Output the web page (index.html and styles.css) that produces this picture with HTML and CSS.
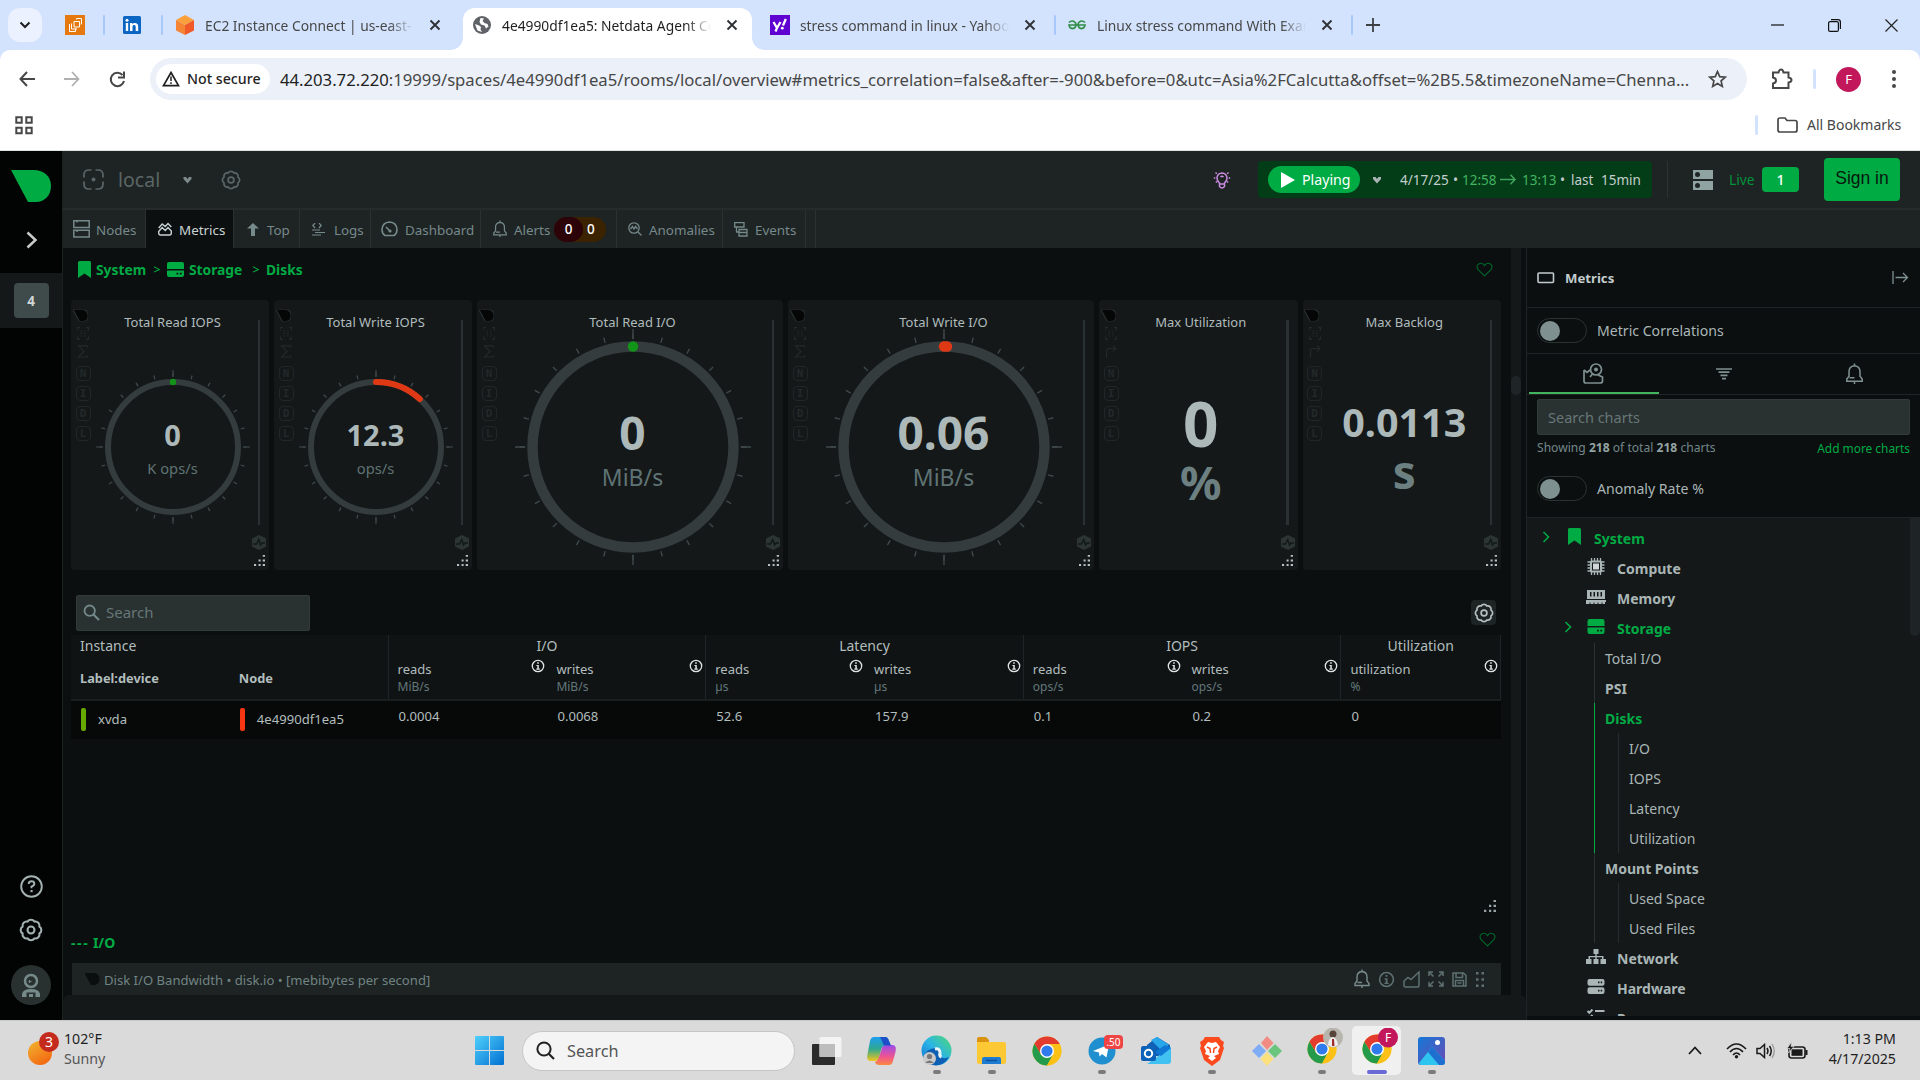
FILE: index.html
```
<!DOCTYPE html>
<html lang="en">
<head>
<meta charset="utf-8">
<title>4e4990df1ea5: Netdata Agent Console</title>
<link rel="stylesheet" href="styles.css">
</head>
<body>
<svg class="defs" width="0" height="0">
  <defs>
    <symbol id="nd" viewBox="0 0 40 32"><path d="M0 0H22C34 0 40 7 40 16C40 26 33 32 25 32H17Z"/></symbol>
    <symbol id="x" viewBox="0 0 14 14"><path d="M2.5 2.5L11.5 11.5M11.5 2.5L2.5 11.5" fill="none" stroke="currentColor" stroke-width="1.9"/></symbol>
    <symbol id="gear" viewBox="-10 -10 20 20"><path d="M-2.9-7A3.4 3.4 0 0 1 2.9-7A3.4 3.4 0 0 1 7-2.9A3.4 3.4 0 0 1 7 2.9A3.4 3.4 0 0 1 2.9 7A3.4 3.4 0 0 1-2.9 7A3.4 3.4 0 0 1-7 2.9A3.4 3.4 0 0 1-7-2.9A3.4 3.4 0 0 1-2.9-7Z" fill="none" stroke="currentColor" stroke-width="1.7"/><circle r="2.9" fill="none" stroke="currentColor" stroke-width="1.7"/></symbol>
    <symbol id="bell" viewBox="0 0 18 20"><path d="M2 16.5V14.5L4 12V8Q4 3 9 2.5Q14 3 14 8V12L16 14.5V16.5ZM9 .5V2.5M9 16.500V19M4.500 13.500H9" fill="none" stroke="currentColor" stroke-width="1.4"/></symbol>
    <symbol id="caret" viewBox="0 0 8 8"><path d="M0 1H2.500L4 3L5.500 1H8V3L4 7.500L0 3Z" fill="currentColor"/></symbol>
    <symbol id="chev" viewBox="0 0 8 12"><path d="M1.500 1L6.500 6L1.500 11" fill="none" stroke="currentColor" stroke-width="1.600"/></symbol>
    <symbol id="bookmark" viewBox="0 0 13 17"><path d="M1.500 0H11.500Q13 0 13 1.500V17L6.500 12.500L0 17V1.500Q0 0 1.500 0Z" fill="currentColor"/></symbol>
    <symbol id="disk" viewBox="0 0 17 15"><path d="M2 0H15Q17 0 17 2V7H0V2Q0 0 2 0ZM0 8.500H17V13Q17 15 15 15H2Q0 15 0 13ZM9.500 10.800V12.600H11.300V10.800ZM12.800 10.800V12.600H14.600V10.800Z" fill="currentColor" fill-rule="evenodd"/></symbol>
    <symbol id="servers" viewBox="0 0 17 15"><path d="M2 0H15Q17 0 17 2V4.700Q17 6.700 15 6.700H2Q0 6.700 0 4.700V2Q0 0 2 0ZM10.500 2.500V4.200H12V2.500ZM13.200 2.500V4.200H14.700V2.500ZM2 8.300H15Q17 8.300 17 10.300V13Q17 15 15 15H2Q0 15 0 13V10.300Q0 8.300 2 8.300ZM10.500 10.800V12.500H12V10.800ZM13.200 10.800V12.500H14.700V10.800Z" fill="currentColor" fill-rule="evenodd"/></symbol>
    <symbol id="heart" viewBox="0 0 18 16"><path d="M9 14.800L2.200 8.200Q.2 5.500 1.600 3.200Q4 .2 7.300 2L9 3.800L10.700 2Q14 .2 16.400 3.200Q17.800 5.500 15.800 8.200Z" fill="none" stroke="currentColor" stroke-width="1.200"/></symbol>
    <symbol id="dots" viewBox="0 0 12 12"><path d="M9.500 0H12V2H9.500ZM5 4.800H7.200V7H5ZM9.500 4.800H12V7H9.500ZM0 9.700H2.300V12H0ZM5 9.700H7.200V12H5ZM9.500 9.700H12V12H9.500Z" fill="currentColor"/></symbol>
    <symbol id="hex" viewBox="0 0 14 15"><path d="M7 0L14 3.600V11.400L7 15L0 11.400V3.600Z" fill="#2c3434"/><path d="M1 9H4.500L6.800 4.500L8.500 10L10 8H13" fill="none" stroke="#131718" stroke-width="1.400"/></symbol>
    <symbol id="info" viewBox="0 0 14 14"><circle cx="7" cy="7" r="5.700" fill="none" stroke="currentColor" stroke-width="1.300"/><path d="M6.200 3.200H7.800V4.700H6.200ZM5.400 6H7.800V9.600H8.800V10.700H5.300V9.600H6.300V7H5.400Z" fill="currentColor"/></symbol>
    <symbol id="mag" viewBox="0 0 17 17"><circle cx="6.700" cy="6.700" r="5.200" fill="none" stroke="currentColor" stroke-width="1.800"/><path d="M10.500 10.500L16 16" stroke="currentColor" stroke-width="2.200"/></symbol>
    <symbol id="grid4" viewBox="0 0 12 13"><path d="M0 3.500V.6H3M9 .6H11.400V3.500M11.400 9.500V12.400H9M3 12.400H.6V9.500M3.500 4H5M7 4H8.500M3.500 6.500H5M7 6.500H8.500M3.500 9H5M7 9H8.500" fill="none" stroke="currentColor" stroke-width="1.200"/></symbol>
    <symbol id="sigma" viewBox="0 0 12 13"><path d="M10.500 2.500V.8H1.500L7 6.500L1.500 12H10.500V10.300" fill="none" stroke="currentColor" stroke-width="1.200"/></symbol>
    <symbol id="turn" viewBox="0 0 12 13"><path d="M1.500 12.500V6.500Q1.500 3.500 4.500 3.500H11M8 .5L11 3.500L8 6.500" fill="none" stroke="currentColor" stroke-width="1.200"/></symbol>
    <symbol id="chrome" viewBox="-15 -15 30 30"><circle r="14.500" fill="#fbc116"/><path d="M-12.560-7.250A14.500 14.500 0 0 1 12.560-7.250L12.560-7H0L-6 3.500Z" fill="#e33b2e"/><path d="M-12.560-7.250A14.500 14.500 0 0 0 0 14.500L6 3.700L-6 3.500Z" fill="#239b4b"/><path d="M0-7H12.560A14.500 14.500 0 0 1 0 14.500L6 3.500Z" fill="#fbc116"/><circle r="7" fill="#fff"/><circle r="5.600" fill="#2f7bee"/></symbol>
    <linearGradient id="gSun" x1="0" y1="0" x2=".6" y2="1"><stop offset="0" stop-color="#f2b630"/><stop offset="1" stop-color="#f26a12"/></linearGradient>
    <linearGradient id="gWin" x1="0" y1="0" x2="1" y2="1"><stop offset="0" stop-color="#4fd0fb"/><stop offset="1" stop-color="#0270d2"/></linearGradient>
    <linearGradient id="gEdge" x1="0" y1="1" x2="1" y2="0"><stop offset="0" stop-color="#0c6fd0"/><stop offset=".5" stop-color="#2bb5e6"/><stop offset="1" stop-color="#4fd96f"/></linearGradient>
    <linearGradient id="gCo1" x1="0" y1="0" x2="0" y2="1"><stop offset="0" stop-color="#1b9df0"/><stop offset=".5" stop-color="#2fa88f"/><stop offset="1" stop-color="#f4c51c"/></linearGradient>
    <linearGradient id="gCo2" x1="0" y1="0" x2="0" y2="1"><stop offset="0" stop-color="#9a4bea"/><stop offset=".6" stop-color="#f0568f"/><stop offset="1" stop-color="#fb8a3c"/></linearGradient>
    <linearGradient id="gPh" x1="0" y1="0" x2="1" y2="1"><stop offset="0" stop-color="#1478d6"/><stop offset="1" stop-color="#6b4bb5"/></linearGradient>
  </defs>
</svg>

<header class="tabstrip">
  <div class="tabsearch"><svg width="12" height="8" viewBox="0 0 12 8"><path d="M1.500 1.500L6 6L10.500 1.500" fill="none" stroke="#1f1f1f" stroke-width="2"/></svg></div>
  <div class="pin pin-a"><svg width="20" height="20" viewBox="0 0 20 20"><rect width="20" height="20" fill="#e5780f"/><path d="M9 6.500H14.500V12H9ZM11.500 4.500V3.500H16.500V9H15.500M4.500 9V16.500H10.500V13.500M6.500 8.500V14H12" fill="none" stroke="#fff" stroke-width="1"/></svg></div>
  <i class="tsep"></i>
  <div class="pin pin-b"><svg width="18" height="18" viewBox="0 0 18 18"><rect width="18" height="18" rx="1.500" fill="#0a66c2"/><path d="M2.800 7H5.200V15H2.800ZM7 7H9.300V8.200C10.500 6.200 15.200 6.300 15.200 10.200V15H12.700V10.800C12.700 8.300 9.500 8.400 9.500 10.800V15H7Z" fill="#fff"/><circle cx="4" cy="4.200" r="1.500" fill="#fff"/></svg></div>
  <i class="tsep"></i>
  <div class="tab tab-ec2"><svg width="18" height="20" viewBox="0 0 18 20"><path d="M9 0L18 5L9 10L0 5Z" fill="#fba13c"/><path d="M0 5L9 10V20L0 15.500Z" fill="#f58534"/><path d="M18 5L9 10V20L18 15.500Z" fill="#f05a28"/></svg><span class="ttl">EC2 Instance Connect | us-east-1</span><svg class="close" width="14" height="14"><use href="#x"/></svg></div>
  <div class="tab tab-on"><svg width="18" height="18" viewBox="0 0 18 18"><circle cx="9" cy="9" r="9" fill="#5f6368"/><path d="M2 8L6 9.500L8 11L7.500 13.500L9 16L4.500 14.500ZM7.500 2L11 2.500L9.500 5L11.500 7L14.500 8L15.500 10.500L13 12.500L11.500 9.500L8 8.500L6.500 6Z" fill="#fff"/></svg><span class="ttl">4e4990df1ea5: Netdata Agent Console</span><svg class="close" width="14" height="14"><use href="#x"/></svg></div>
  <div class="tab tab-yahoo"><svg width="20" height="20" viewBox="0 0 20 20"><rect width="20" height="20" fill="#5f01d1"/><path d="M3.500 7L7 13L5.500 16.500M10.500 7L7 13M15.800 4L13 10.500" fill="none" stroke="#fff" stroke-width="2.300"/><circle cx="12.300" cy="13.200" r="1.400" fill="#fff"/></svg><span class="ttl">stress command in linux - Yahoo Search</span><svg class="close" width="14" height="14"><use href="#x"/></svg></div>
  <i class="tsep"></i>
  <div class="tab tab-gfg"><svg width="18" height="10" viewBox="0 0 18 10"><path d="M1 2.500Q3 .5 5.500 1.200Q8.300 2.500 8 5Q7.500 8.500 4.500 8.700Q1.500 8.500 1 5H17Q16.500 8.500 13.500 8.700Q10.500 8.500 10 5Q9.700 2.500 12.500 1.200Q15 .5 17 2.500" fill="none" stroke="#2f8d46" stroke-width="1.700"/></svg><span class="ttl">Linux stress command With Examples</span><svg class="close" width="14" height="14"><use href="#x"/></svg></div>
  <i class="tsep"></i>
  <svg class="plus" width="14" height="14" viewBox="0 0 14 14"><path d="M7 0V14M0 7H14" stroke="#3c4043" stroke-width="1.800"/></svg>
  <div class="winbtns">
    <svg width="13" height="13" viewBox="0 0 13 13"><path d="M0 6H13" stroke="#111" stroke-width="1.200"/></svg>
    <svg width="13" height="13" viewBox="0 0 13 13"><rect x=".6" y="2.600" width="9.800" height="9.800" rx="1.500" fill="none" stroke="#111" stroke-width="1.200"/><path d="M3 .6H10Q12.400.6 12.400 3V10" fill="none" stroke="#111" stroke-width="1.200"/></svg>
    <svg width="13" height="13" viewBox="0 0 13 13"><path d="M.5.5L12.500 12.500M12.500.5L.5 12.500" stroke="#222" stroke-width="1.200"/></svg>
  </div>
</header>

<section class="chrome-bars">
  <div class="toolbar">
    <svg class="nav-back" width="16" height="16" viewBox="0 0 16 16"><path d="M8 1L1.500 8L8 15M1.500 8H16" fill="none" stroke="#474747" stroke-width="2"/></svg>
    <svg class="nav-fwd" width="16" height="16" viewBox="0 0 16 16"><path d="M8 1L14.500 8L8 15M14.500 8H0" fill="none" stroke="#b0b0b0" stroke-width="1.800"/></svg>
    <svg class="nav-reload" width="17" height="17" viewBox="0 0 17 17"><path d="M13.500 4A6.700 6.700 0 1 0 15 10M15 .5V6.500H9" fill="none" stroke="#474747" stroke-width="2"/></svg>
    <div class="omnibox">
      <div class="chip"><svg width="18" height="16" viewBox="0 0 18 16"><path d="M9 1.500L16.500 14.700H1.500Z" fill="none" stroke="#1f1f1f" stroke-width="1.700"/><path d="M9 5.500V10M9 11.300V13" stroke="#1f1f1f" stroke-width="1.500"/></svg><span>Not secure</span></div>
      <div class="url"><b>44.203.72.220</b>:19999/spaces/4e4990df1ea5/rooms/local/overview#metrics_correlation=false&amp;after=-900&amp;before=0&amp;utc=Asia%2FCalcutta&amp;offset=%2B5.5&amp;timezoneName=Chenna...</div>
      <svg class="star" width="19" height="18" viewBox="0 0 19 18"><path d="M9.500 1.500L11.700 6.700L17.300 7.200L13.100 10.900L14.300 16.400L9.500 13.500L4.700 16.400L5.900 10.900L1.700 7.200L7.300 6.700Z" fill="none" stroke="#474747" stroke-width="1.700"/></svg>
    </div>
    <svg class="puzzle" width="22" height="22" viewBox="0 0 22 22"><path d="M2 4.500H7.500Q8 1.500 10 1.500Q12 1.500 12.500 4.500H17.500V9.500Q20.500 10 20.500 12Q20.500 14 17.500 14.500V20H2V15.500Q5 15 5 12.500Q5 10 2 9.500Z" fill="none" stroke="#474747" stroke-width="2"/></svg>
    <i class="tbsep"></i>
    <div class="avatar">F</div>
    <svg class="kebab" width="4" height="18" viewBox="0 0 4 18"><circle cx="2" cy="2" r="2"/><circle cx="2" cy="9" r="2"/><circle cx="2" cy="16" r="2"/></svg>
  </div>
  <div class="bookmarks">
    <svg width="19" height="19" viewBox="0 0 19 19"><path d="M1.300 1.300H6.700V6.700H1.300ZM11.300 1.300H16.700V6.700H11.300ZM1.300 11.800H6.700V17.200H1.300ZM11.300 11.800H16.700V17.200H11.300Z" fill="none" stroke="#474747" stroke-width="2"/></svg>
    <i class="tbsep"></i>
    <svg width="21" height="16" viewBox="0 0 21 16"><path d="M1 3Q1 1 3 1H8L10 3.500H18Q20 3.500 20 5.500V13Q20 15 18 15H3Q1 15 1 13Z" fill="none" stroke="#474747" stroke-width="1.700"/></svg>
    <span>All Bookmarks</span>
  </div>
</section>

<main class="app">
  <nav class="rail">
    <svg class="logo" width="40" height="32"><use href="#nd"/></svg>
    <svg class="rail-chev" width="12" height="18" viewBox="0 0 12 18"><path d="M1.500 1.500L9.500 9L1.500 16.500" fill="none" stroke="#c6cccc" stroke-width="2.500"/></svg>
    <div class="space"><span>4</span></div>
    <svg class="rail-help" width="23" height="23" viewBox="0 0 23 23"><circle cx="11.500" cy="11.500" r="10.300" fill="none" stroke="#a4b1b1" stroke-width="1.900"/><path d="M8.700 9Q8.700 6.300 11.500 6.300Q14.300 6.300 14.300 8.700Q14.300 10.500 11.500 11.700V13.300" fill="none" stroke="#a4b1b1" stroke-width="1.900"/><rect x="10.500" y="15" width="2.100" height="2.200" fill="#a4b1b1"/></svg>
    <svg class="rail-gear" width="24" height="24"><use href="#gear"/></svg>
    <div class="user"><svg width="24" height="24" viewBox="0 0 24 24"><circle cx="12" cy="8" r="6" fill="none" stroke="#768a8a" stroke-width="2.500"/><path d="M9.500 8.500H12.500M10.500 7V10" stroke="#768a8a" stroke-width="1.200"/><path d="M3 24V21Q4 16 12 16Q20 16 21 21V24H16.500V19.500H7.500V24Z" fill="#768a8a"/><path d="M10 21H14V24H10Z" fill="#768a8a"/></svg></div>
  </nav>

  <div class="body">
    <div class="topbar">
      <svg class="room" width="21" height="21" viewBox="0 0 21 21"><path d="M8.500 1H6Q1 1 1 6V8.500M12.500 1H15Q20 1 20 6V8.500M8.500 20H6Q1 20 1 15V12.500M12.500 20H15Q20 20 20 15V12.500" fill="none" stroke="#5b6666" stroke-width="1.700"/><circle cx="10.500" cy="10.500" r="2" fill="#5b6666"/></svg>
      <span class="roomname">local</span>
      <svg class="caret1" width="9" height="8"><use href="#caret"/></svg>
      <svg class="gear1" width="20" height="20"><use href="#gear"/></svg>
      <svg class="bulb" width="18" height="22" viewBox="0 0 18 22"><path d="M6.500 14Q3.700 11.500 4 8.500Q4.800 4.200 9 4Q13.200 4.200 14 8.500Q14.300 11.500 11.500 14V17.500Q9 20.500 6.500 17.500ZM6.500 15H11.500M2.500 3.500L3.800 4.800M15.500 3.500L14.200 4.800M.8 9H2.300M17.200 9H15.700M2.800 13.500L4 12.500M15.200 13.500L14 12.500M7.500 8Q9 6.500 10.500 8" fill="none" stroke="#c98be0" stroke-width="1.500"/></svg>
      <div class="timebox">
        <div class="playing"><svg width="14" height="16" viewBox="0 0 14 16"><path d="M0 0L14 8L0 16Z" fill="#fff"/></svg><span>Playing</span></div>
        <svg class="caret2" width="8" height="8"><use href="#caret"/></svg>
        <span class="t-date">4/17/25</span><span class="t-dot">•</span><span class="t-g">12:58</span>
        <svg class="arrow" width="16" height="11" viewBox="0 0 16 11"><path d="M0 5.500H15M10.500.8L15 5.500L10.500 10.200" fill="none" stroke="#42a55d" stroke-width="1.500"/></svg>
        <span class="t-g">13:13</span><span class="t-dot">•</span><span class="t-last">last</span><span>15min</span>
      </div>
      <i class="vsep"></i>
      <svg class="nodeicon" width="20" height="20" viewBox="0 0 20 20"><path d="M0 0H20V9H0ZM0 11H20V20H0Z" fill="#8fa3a3"/><circle cx="4.500" cy="4.500" r="2.500" fill="#1e2323"/><circle cx="4.500" cy="15.500" r="2.500" fill="#1e2323"/></svg>
      <span class="live">Live</span><span class="one">1</span>
      <div class="signin">Sign in</div>
    </div>

    <div class="tabs">
      <div class="nt w-nodes"><svg width="17" height="18" viewBox="0 0 17 18"><path d="M.8.8H16.200V7.500H.8ZM.8 10.300H16.200V17H.8ZM4 .8V2.500M4 10.300V12" fill="none" stroke="currentColor" stroke-width="1.500"/></svg><span>Nodes</span></div>
      <div class="nt w-metrics on"><svg width="14" height="14" viewBox="0 0 14 14"><path d="M.7 6L4.200 2L7.200 4.500L10 1.500L13.300 5M.7 9.500L4.200 5.500L7.200 8.500L10 5.500L13.300 9V11Q13.300 13 11.500 13H2.500Q.7 13 .7 11Z" fill="none" stroke="currentColor" stroke-width="1.400"/></svg><span>Metrics</span></div>
      <div class="nt w-top"><svg width="12" height="13" viewBox="0 0 12 13"><path d="M6 0L12 5.500H8V13H4V5.500H0Z" fill="currentColor"/></svg><span>Top</span></div>
      <div class="nt w-logs"><svg width="13" height="13" viewBox="0 0 13 13"><path d="M3 0L.8 2.500L3 5M7 0L9.200 2.500L7 5M0 7H8M3 9.500H13M0 12H9" fill="none" stroke="currentColor" stroke-width="1.200"/></svg><span>Logs</span></div>
      <div class="nt w-dash"><svg width="17" height="16" viewBox="0 0 17 16"><path d="M4 14.500Q1 12.500 1 8.500Q1.500 1.500 8.500 1Q15.500 1.500 16 8.500Q16 12.500 13 14.500ZM5 6L9.500 10.500" fill="none" stroke="currentColor" stroke-width="1.600"/><circle cx="9" cy="10" r="1.600" fill="currentColor"/></svg><span>Dashboard</span></div>
      <div class="nt w-alerts"><svg width="16" height="18"><use href="#bell"/></svg><span>Alerts</span><div class="pill"><b>0</b><em>0</em></div></div>
      <div class="nt w-anom"><svg width="14" height="14" viewBox="0 0 14 14"><circle cx="6" cy="6" r="5.200" fill="none" stroke="currentColor" stroke-width="1.300"/><path d="M10 10L13.500 13.500M2.500 7L4.500 4.500L6 7L7.500 4.500L9.500 7" fill="none" stroke="currentColor" stroke-width="1.300"/></svg><span>Anomalies</span></div>
      <div class="nt w-events"><svg width="14" height="15" viewBox="0 0 14 15"><path d="M.7.7H10V5H.7ZM2.500 5V10H5M5 7.500H13V14H5ZM5 10.500H13" fill="none" stroke="currentColor" stroke-width="1.300"/></svg><span>Events</span></div>
      <div class="nt w-stub"></div>
    </div>

    <div class="columns">
      <div class="main">
        <div class="scroll">
          <div class="content">
            <div class="crumbs">
              <svg width="13" height="17"><use href="#bookmark"/></svg><span class="c1">System</span><span class="gt">&gt;</span>
              <svg width="17" height="15"><use href="#disk"/></svg><span class="c2">Storage</span><span class="gt">&gt;</span><span>Disks</span>
              <svg class="heart" width="17" height="15"><use href="#heart"/></svg>
            </div>

            <div class="cards">
              <article class="card small">
                <div class="tools"><svg class="tnd" width="17" height="13" viewBox="-1 -1 42 34"><use href="#nd" width="40" height="32"/></svg><svg width="12" height="13"><use href="#grid4"/></svg><svg width="12" height="13"><use href="#sigma"/></svg><b>N</b><b>I</b><b>D</b><b>L</b></div>
                <div class="mid"><h3>Total Read IOPS</h3>
                  <div class="gauge"><svg width="154" height="156" viewBox="-77 -78 154 156"><circle r="65" class="ring"/><circle r="72" class="tick" pathLength="360"/><circle r="73.800" class="tick long" pathLength="360"/><circle cy="-65" r="3.200" fill="#129419"/></svg><div class="read"><strong>0</strong><span>K ops/s</span></div></div></div>
                <div class="side"><i></i><svg width="14" height="15"><use href="#hex"/></svg><svg class="rs" width="12" height="12"><use href="#dots"/></svg></div>
              </article>
              <article class="card small">
                <div class="tools"><svg class="tnd" width="17" height="13" viewBox="-1 -1 42 34"><use href="#nd" width="40" height="32"/></svg><svg width="12" height="13"><use href="#grid4"/></svg><svg width="12" height="13"><use href="#sigma"/></svg><b>N</b><b>I</b><b>D</b><b>L</b></div>
                <div class="mid"><h3>Total Write IOPS</h3>
                  <div class="gauge"><svg width="154" height="156" viewBox="-77 -78 154 156"><circle r="65" class="ring"/><circle r="72" class="tick" pathLength="360"/><circle r="73.800" class="tick long" pathLength="360"/><path d="M0-65A65 65 0 0 1 43.800-48" class="arc"/></svg><div class="read"><strong>12.3</strong><span>ops/s</span></div></div></div>
                <div class="side"><i></i><svg width="14" height="15"><use href="#hex"/></svg><svg class="rs" width="12" height="12"><use href="#dots"/></svg></div>
              </article>
              <article class="card big">
                <div class="tools"><svg class="tnd" width="17" height="13" viewBox="-1 -1 42 34"><use href="#nd" width="40" height="32"/></svg><svg width="12" height="13"><use href="#grid4"/></svg><svg width="12" height="13"><use href="#sigma"/></svg><b>N</b><b>I</b><b>D</b><b>L</b></div>
                <div class="mid"><h3>Total Read I/O</h3>
                  <div class="gauge"><svg width="238" height="238" viewBox="-119 -119 238 238"><circle r="100.500" class="ring"/><circle r="110.500" class="tick" pathLength="360"/><circle r="113" class="tick long" pathLength="360"/><circle cy="-100.500" r="5.200" fill="#129419"/></svg><div class="read"><strong>0</strong><span>MiB/s</span></div></div></div>
                <div class="side"><i></i><svg width="14" height="15"><use href="#hex"/></svg><svg class="rs" width="12" height="12"><use href="#dots"/></svg></div>
              </article>
              <article class="card big">
                <div class="tools"><svg class="tnd" width="17" height="13" viewBox="-1 -1 42 34"><use href="#nd" width="40" height="32"/></svg><svg width="12" height="13"><use href="#grid4"/></svg><svg width="12" height="13"><use href="#sigma"/></svg><b>N</b><b>I</b><b>D</b><b>L</b></div>
                <div class="mid"><h3>Total Write I/O</h3>
                  <div class="gauge"><svg width="238" height="238" viewBox="-119 -119 238 238"><circle r="100.500" class="ring"/><circle r="110.500" class="tick" pathLength="360"/><circle r="113" class="tick long" pathLength="360"/><path d="M0-100.500L3-100.400" class="arc"/></svg><div class="read"><strong>0.06</strong><span>MiB/s</span></div></div></div>
                <div class="side"><i></i><svg width="14" height="15"><use href="#hex"/></svg><svg class="rs" width="12" height="12"><use href="#dots"/></svg></div>
              </article>
              <article class="card num">
                <div class="tools"><svg class="tnd" width="17" height="13" viewBox="-1 -1 42 34"><use href="#nd" width="40" height="32"/></svg><svg width="12" height="13"><use href="#grid4"/></svg><svg width="12" height="13"><use href="#turn"/></svg><b>N</b><b>I</b><b>D</b><b>L</b></div>
                <div class="mid"><h3>Max Utilization</h3><strong class="n-util">0</strong><span class="u-util">%</span></div>
                <div class="side"><i></i><svg width="14" height="15"><use href="#hex"/></svg><svg class="rs" width="12" height="12"><use href="#dots"/></svg></div>
              </article>
              <article class="card num">
                <div class="tools"><svg class="tnd" width="17" height="13" viewBox="-1 -1 42 34"><use href="#nd" width="40" height="32"/></svg><svg width="12" height="13"><use href="#grid4"/></svg><svg width="12" height="13"><use href="#turn"/></svg><b>N</b><b>I</b><b>D</b><b>L</b></div>
                <div class="mid"><h3>Max Backlog</h3><strong class="n-back">0.0113</strong><span class="u-back">s</span></div>
                <div class="side"><i></i><svg width="14" height="15"><use href="#hex"/></svg><svg class="rs" width="12" height="12"><use href="#dots"/></svg></div>
              </article>
            </div>

            <div class="tablebar">
              <div class="search"><svg width="17" height="17"><use href="#mag"/></svg><span>Search</span></div>
              <div class="gearbtn"><svg width="20" height="20"><use href="#gear"/></svg></div>
            </div>

            <div class="table">
              <div class="groups">
                <div class="g2 left">Instance</div><div class="g2">I/O</div><div class="g2">Latency</div><div class="g2">IOPS</div><div class="g1">Utilization</div>
              </div>
              <div class="heads">
                <div class="lab">Label:device</div>
                <div class="lab br">Node</div>
                <div class="hd"><p>reads<small>MiB/s</small></p><svg width="14" height="14"><use href="#info"/></svg></div>
                <div class="hd br"><p>writes<small>MiB/s</small></p><svg width="14" height="14"><use href="#info"/></svg></div>
                <div class="hd"><p>reads<small>µs</small></p><svg width="14" height="14"><use href="#info"/></svg></div>
                <div class="hd br"><p>writes<small>µs</small></p><svg width="14" height="14"><use href="#info"/></svg></div>
                <div class="hd"><p>reads<small>ops/s</small></p><svg width="14" height="14"><use href="#info"/></svg></div>
                <div class="hd br"><p>writes<small>ops/s</small></p><svg width="14" height="14"><use href="#info"/></svg></div>
                <div class="hd br"><p>utilization<small>%</small></p><svg width="14" height="14"><use href="#info"/></svg></div>
              </div>
              <div class="row">
                <div class="key"><i class="kg"></i>xvda</div><div class="key"><i class="kr"></i>4e4990df1ea5</div>
                <div>0.0004</div><div>0.0068</div><div>52.6</div><div>157.9</div><div>0.1</div><div>0.2</div><div>0</div>
              </div>
            </div>
            <div class="tableresize"><svg width="12" height="12"><use href="#dots"/></svg></div>
            <div class="subhead"><span><span class="dashes">---</span> I/O</span><svg class="heart" width="17" height="15"><use href="#heart"/></svg></div>
            <div class="chartbar">
              <svg width="16" height="14" viewBox="-1 -1 42 34"><use href="#nd" width="40" height="32" fill="#0b0e0f"/></svg>
              <span>Disk I/O Bandwidth • disk.io • [mebibytes per second]</span>
              <div class="cbicons">
                <svg width="18" height="20"><use href="#bell"/></svg>
                <svg width="17" height="17"><use href="#info"/></svg>
                <svg width="17" height="17" viewBox="0 0 17 17"><path d="M1 10L5 6.500L8 8.500L16 1V14.500Q16 16 14.500 16H2.500Q1 16 1 14.500Z" fill="none" stroke="currentColor" stroke-width="1.500"/></svg>
                <svg width="16" height="16" viewBox="0 0 16 16"><path d="M1 5V1H5M1 1L5.500 5.500M11 1H15V5M15 1L10.500 5.500M1 11V15H5M1 15L5.500 10.500M15 11V15H11M15 15L10.500 10.500" fill="none" stroke="currentColor" stroke-width="1.500"/></svg>
                <svg width="15" height="15" viewBox="0 0 15 15"><path d="M1 1H11.500L14 3.500V14H1ZM4 1V5.500H10.500V1M3.500 14V8.500H11.500V14M5.500 11H9.500" fill="none" stroke="currentColor" stroke-width="1.500"/></svg>
                <svg width="10" height="17" viewBox="0 0 10 17"><path d="M1 1H3.500V3.500H1ZM6.500 1H9V3.500H6.500ZM1 7.200H3.500V9.700H1ZM6.500 7.200H9V9.700H6.500ZM1 13.500H3.500V16H1ZM6.500 13.500H9V16H6.500Z" fill="currentColor"/></svg>
              </div>
            </div>
          </div>
          <div class="sbar"><i></i></div>
        </div>
        <div class="footer"></div>
      </div>

      <aside class="panel">
        <div class="p-title"><svg width="18" height="12" viewBox="0 0 18 12"><rect x="1" y="1" width="15.500" height="9.500" rx="1" fill="none" stroke="#c3cccc" stroke-width="1.600"/></svg><span>Metrics</span><svg class="collapse" width="17" height="13" viewBox="0 0 17 13"><path d="M1 0V13M3.500 6.500H15.500M11 2L15.500 6.500L11 11" fill="none" stroke="#7f9191" stroke-width="1.300"/></svg></div>
        <div class="p-toggle t1"><i class="toggle"></i><span>Metric Correlations</span></div>
        <div class="p-tabs">
          <div class="sel"><svg width="21" height="21" viewBox="0 0 21 21"><path d="M1 7V18Q1 20 3 20H17Q19.500 20 19.500 18V14L15 12M1 7L4 9.500L7 7" fill="none" stroke="currentColor" stroke-width="1.700"/><circle cx="13" cy="6.500" r="5.500" fill="none" stroke="currentColor" stroke-width="1.700"/><circle cx="13" cy="6.500" r="2" fill="currentColor"/><path d="M9.500 11L7 14" stroke="currentColor" stroke-width="1.700"/></svg></div>
          <div><svg width="16" height="12" viewBox="0 0 16 12"><path d="M0 1H16M2.500 4.200H13.500M4.500 7.400H11.500M6 10.600H10" stroke="currentColor" stroke-width="1.700"/></svg></div>
          <div><svg width="21" height="22"><use href="#bell"/></svg></div>
        </div>
        <div class="p-search">Search charts</div>
        <div class="p-count"><span>Showing <b>218</b> of total <b>218</b> charts</span><a>Add more charts</a></div>
        <div class="p-toggle t2"><i class="toggle"></i><span>Anomaly Rate %</span></div>
        <div class="treewrap">
          <div class="tree">
            <div class="tr l0 green"><svg class="ch" width="8" height="12"><use href="#chev"/></svg><svg class="ic" width="13" height="17"><use href="#bookmark"/></svg><b>System</b></div>
            <div class="tr l1"><svg class="ic" width="17" height="17" viewBox="0 0 17 17"><path d="M4 0V17M7 0V17M10 0V17M13 0V17M0 4H17M0 7H17M0 10H17M0 13H17" stroke="currentColor" stroke-width="1.300"/><rect x="2.500" y="2.500" width="12" height="12" rx="1.500" fill="currentColor"/><rect x="5" y="5" width="7" height="7" fill="#cfd6d6" stroke="#141819" stroke-width="1"/></svg><b>Compute</b></div>
            <div class="tr l1"><svg class="ic" width="20" height="14" viewBox="0 0 20 14"><path d="M1 0H19V9H1ZM4 2V6.500H5.500V2ZM7.500 2V6.500H9V2ZM11 2V6.500H12.500V2ZM14.500 2V6.500H16V2ZM0 10H20V12H19V14H16.500V12.500H15.500V14H12.500V12.500H11.500V14H8.500V12.500H7.500V14H4.500V12.500H3.500V14H0Z" fill="currentColor" fill-rule="evenodd"/></svg><b>Memory</b></div>
            <div class="tr l1 green"><svg class="ch" width="8" height="12"><use href="#chev"/></svg><svg class="ic" width="17" height="15"><use href="#disk"/></svg><b>Storage</b></div>
            <div class="branch">
              <div class="node"><div class="tr">Total I/O</div></div>
              <div class="node"><div class="tr"><b>PSI</b></div></div>
              <div class="node act"><div class="tr green"><b>Disks</b></div>
                <div class="leafs"><div class="tr">I/O</div><div class="tr">IOPS</div><div class="tr">Latency</div><div class="tr">Utilization</div></div></div>
              <div class="node"><div class="tr"><b>Mount Points</b></div>
                <div class="leafs"><div class="tr">Used Space</div><div class="tr">Used Files</div></div></div>
            </div>
            <div class="tr l1"><svg class="ic" width="20" height="15" viewBox="0 0 20 15"><path d="M7.500 0H12.500V5H10.700V7H17.500V10H20V15H14.500V10H16V8.300H10.700V10H12.500V15H7.500V10H9.300V8.300H4V10H5.500V15H0V10H2.500V7H9.300V5H7.500Z" fill="currentColor"/></svg><b>Network</b></div>
            <div class="tr l1"><svg class="ic" width="17" height="15"><use href="#servers"/></svg><b>Hardware</b></div>
            <div class="tr l1"><svg class="ic" width="17" height="15" viewBox="0 0 17 15"><path d="M0 2L1.800 3.800L5 .5M7.500 2H17M0 7.500L1.800 9.300L5 6M7.500 8H17" fill="none" stroke="currentColor" stroke-width="2"/></svg><b>Processes</b></div>
          </div>
          <div class="tbar"><i></i></div>
        </div>
      </aside>
    </div>
  </div>
</main>

<footer class="taskbar">
  <div class="weather"><svg width="36" height="36" viewBox="0 0 36 36"><circle cx="14" cy="21" r="12" fill="url(#gSun)"/><circle cx="23" cy="10" r="10" fill="#c42b1c"/><text x="23" y="15" text-anchor="middle" class="wbadge">3</text></svg><p>102°F<small>Sunny</small></p></div>
  <svg class="start" width="29" height="29" viewBox="0 0 29 29"><path d="M1 0H14V14H0V1Q0 0 1 0ZM15 0H28Q29 0 29 1V14H15ZM0 15H14V29H1Q0 29 0 28ZM15 15H29V28Q29 29 28 29H15Z" fill="url(#gWin)"/></svg>
  <div class="tsearch"><svg width="19" height="19" viewBox="0 0 19 19"><circle cx="8" cy="8" r="6.600" fill="none" stroke="#222" stroke-width="2"/><path d="M12.500 12.500L18 18" stroke="#222" stroke-width="2.200"/></svg><span>Search</span></div>
  <div class="apps">
    <div class="appi"><svg width="31" height="30" viewBox="0 0 31 30"><rect x="1" y="8" width="23" height="21" rx="1" fill="#2b2b2b"/><rect x="8.500" y="1" width="22" height="20" rx="1.500" fill="#f4f4f4" opacity=".93"/><rect x="8.500" y="8" width="15.500" height="13" fill="#bdbdbd"/></svg></div>
    <div class="appi"><svg width="31" height="30" viewBox="0 0 31 30"><path d="M8 1H19Q22 1 23 5L25 10H19Q16 10 15 14L13 22Q12 25 9 25H4Q0 24 1.500 18L4 5Q5 1 8 1Z" fill="url(#gCo1)"/><path d="M23 29H13Q10 29 9 26Q12 25 13 21L16 12Q17 9 20 9H27Q31 10 29.500 16L27 25Q26 29 23 29Z" fill="url(#gCo2)"/><path d="M14 1H19Q22 1 23 5L25 9.500H19Q17 9 16 5Z" fill="#1c50c8"/></svg></div>
    <div class="appi dot"><svg width="31" height="31" viewBox="0 0 31 31"><circle cx="15.500" cy="15.500" r="15" fill="url(#gEdge)"/><path d="M2 23Q5 13 15 13Q22 14 19 20Q21 25 28 22Q23 31 14 30.300Q6 30 2 23Z" fill="#0d5fb4"/><path d="M14 13Q19 12 20 17Q18 21 22 22.500Q27 23 30 19L31 31H22Q16 26 14 20Z" fill="#dadada" opacity="0"/><path d="M14 14Q19 13 19 18Q18 21 20.500 22" fill="none" stroke="#e8f3f3" stroke-width="3"/><circle cx="8.500" cy="23.500" r="6.500" fill="#c9c9c9"/><circle cx="8.500" cy="21.500" r="2.600" fill="#777"/><path d="M4 28Q8.500 23 13 28Z" fill="#777"/></svg></div>
    <div class="appi dot"><svg width="31" height="28" viewBox="0 0 31 28"><path d="M1 2Q1 0 3 0H10L13 3V8H1Z" fill="#d99311"/><path d="M1 5H28Q30 5 30 7V25Q30 27 28 27H3Q1 27 1 25Z" fill="#fcc934"/><path d="M6 27V22Q6 20 8 20H23Q25 20 25 22V27Z" fill="#1d7cd2"/><path d="M10 23.500H21" stroke="#0d5099" stroke-width="1.500"/></svg></div>
    <div class="appi"><svg width="30" height="30"><use href="#chrome"/></svg></div>
    <div class="appi dot"><svg class="tg" width="36" height="31" viewBox="0 0 36 31"><circle cx="14" cy="17" r="13.500" fill="#1f8fcf"/><path d="M5 17L21 10.500L18.500 23.500L14 20L11.500 22.500L11 18.500Z" fill="#fff"/><rect x="16" y="1" width="19" height="14" rx="4" fill="#ee4444"/><text x="25.500" y="12" text-anchor="middle" class="tgb">.50</text></svg></div>
    <div class="appi"><svg width="31" height="29" viewBox="0 0 31 29"><path d="M6 9L16 1L29 9V20H6Z" fill="#0f5fb5"/><path d="M10 4L16 1L28 9L20 14Z" fill="#28a8ea"/><path d="M6 28L30 11V25Q30 28 27 28Z" fill="#41c0f2"/><path d="M14 16L24 9L30 12L20 20Z" fill="#0f78d4"/><rect x="0" y="10" width="15" height="15" rx="2" fill="#0b62b8"/><circle cx="7.500" cy="17.500" r="3.700" fill="none" stroke="#fff" stroke-width="2"/></svg></div>
    <div class="appi dot"><svg width="26" height="30" viewBox="0 0 26 30"><path d="M6 1H20L22 4L25 6L24 10L25 12L21 24L13 30L5 24L1 12L2 10L1 6L4 4Z" fill="#fb4a1d"/><path d="M13 7L17 6L21 11L19 15L20 18L15 20L17 22L13 25L9 22L11 20L6 18L7 15L5 11L9 6Z" fill="#fff"/><path d="M8 11L11 12.500L11.500 17M18 11L15 12.500L14.500 17" fill="none" stroke="#fb4a1d" stroke-width="1.500"/></svg></div>
    <div class="appi"><svg width="30" height="30" viewBox="0 0 30 30"><path d="M15 0L21.500 7L15 14L9 7Z" fill="#f28b82"/><path d="M0 15L7 8L14 15L7 22Z" fill="#7eacf5"/><path d="M30 15L23 8L16 15L23 22Z" fill="#6cc57c"/><path d="M15 30L8.500 23L15 16L21.500 23Z" fill="#fbe07c"/></svg></div>
    <div class="appi dot"><svg class="badged" width="38" height="38" viewBox="0 0 38 38"><use href="#chrome" x="1" y="6" width="30" height="30"/><circle cx="27" cy="9.500" r="10" fill="#b8b5ae"/><circle cx="27" cy="6" r="3.500" fill="#584438"/><path d="M22 17Q23 9 27 9Q31 10 32 17Q27 21 22 17Z" fill="#eee"/><path d="M26 11L28 11L28.500 18H26Z" fill="#a32b2b"/></svg></div>
    <div class="appi act"><svg class="badged" width="38" height="38" viewBox="0 0 38 38"><use href="#chrome" x="1" y="6" width="30" height="30"/><circle cx="27" cy="9.500" r="10" fill="#c2185b"/><text x="27" y="14" text-anchor="middle" class="fbadge">F</text></svg></div>
    <div class="appi dot"><svg width="27" height="28" viewBox="0 0 27 28"><rect width="27" height="28" rx="3" fill="url(#gPh)"/><path d="M1 26L14 10L27 24V25Q27 28 24 28H3Q1 28 1 26Z" fill="#2ec4f0"/><path d="M14 10L27 24V25Q27 28 24 28H21L10 15Z" fill="#1f6fd0"/><circle cx="19.500" cy="5.500" r="2.500" fill="#fff"/></svg></div>
  </div>
  <div class="tray">
    <svg class="up" width="14" height="9" viewBox="0 0 14 9"><path d="M1 8L7 1.500L13 8" fill="none" stroke="#1a1a1a" stroke-width="1.800"/></svg>
    <svg class="wifi" width="21" height="16" viewBox="0 0 21 16"><path d="M1 6Q10.500-4 20 6M4 9Q10.500 2 17 9M7 12Q10.500 8 14 12" fill="none" stroke="#1a1a1a" stroke-width="1.600"/><circle cx="10.500" cy="13.700" r="1.700" fill="#1a1a1a"/></svg>
    <svg class="vol" width="19" height="16" viewBox="0 0 19 16"><path d="M1 5.500H4L8.500 1.500V14.500L4 10.500H1Z" fill="none" stroke="#1a1a1a" stroke-width="1.500"/><path d="M11 5Q13 8 11 11M13.500 3Q17 8 13.500 13" fill="none" stroke="#1a1a1a" stroke-width="1.500"/><path d="M16 1Q20.500 8 16 15" fill="none" stroke="#999" stroke-width="1.300"/></svg>
    <svg class="bat" width="21" height="17" viewBox="0 0 21 17"><rect x="2" y="5" width="16" height="11" rx="2.500" fill="none" stroke="#1a1a1a" stroke-width="1.600"/><rect x="4.500" y="7.300" width="11" height="6.500" fill="#1a1a1a"/><path d="M19.500 8V13" stroke="#1a1a1a" stroke-width="2"/><path d="M4.500 0L0 6.500H3L1.500 11L7 4.500H4Z" fill="#1a1a1a" stroke="#dadada" stroke-width=".7"/></svg>
    <p>1:13 PM<small>4/17/2025</small></p>
  </div>
</footer>
</body>
</html>
```
FILE: styles.css
```
* { box-sizing: border-box; }
body { margin: 0; width: 1920px; height: 1080px; overflow: hidden; display: flex; flex-direction: column; background: #0b0f10; font-family: "Noto Sans", "Open Sans", sans-serif; font-size: 14.2px; color: #a6b2b2; }
p, h3 { margin: 0; }
svg { flex: none; display: block; }
span { white-space: nowrap; }
.defs { position: absolute; }

/* browser tab strip */
.tabstrip { height: 50px; flex: none; background: #d3e3fd; display: flex; align-items: center; color: #474747; font-size: 13.8px; position: relative; z-index: 1; }
.tabsearch { margin-left: 8px; width: 34px; height: 34px; border-radius: 12px; background: #ebf1fe; display: flex; align-items: center; justify-content: center; }
.pin { display: flex; }
.pin-a { width: 61px; padding-left: 23px; }
.pin-b { width: 56px; padding-left: 18px; }
.tsep { width: 2px; height: 20px; background: #a8c7fa; border-radius: 1px; }
.tab { display: flex; align-items: center; height: 42px; margin-top: 8px; padding-bottom: 8px; }
.tab svg:first-child { margin-right: 11px; }
.ttl { width: 209px; overflow: hidden; line-height: 24px; padding-top: 1px; -webkit-mask-image: linear-gradient(90deg, #000 88%, transparent 100%); mask-image: linear-gradient(90deg, #000 88%, transparent 100%); }
.close { margin-left: auto; color: #303134; }
.tab-ec2 { width: 300px; padding-left: 13px; padding-right: 21px; }
.tab-on { width: 289px; padding-left: 10px; padding-right: 13px; background: #fff; border-radius: 12px 12px 0 0; color: #1f1f1f; position: relative; }
.tab-on::before, .tab-on::after { content: ""; position: absolute; bottom: 0; width: 12px; height: 12px; }
.tab-on::before { left: -12px; background: radial-gradient(circle at 0 0, transparent 11.5px, #fff 12px); }
.tab-on::after { right: -12px; background: radial-gradient(circle at 100% 0, transparent 11.5px, #fff 12px); }
.tab-yahoo { width: 302px; padding-left: 18px; padding-right: 17px; }
.tab-yahoo svg:first-child { margin-right: 10px; }
.tab-gfg { width: 295px; padding-left: 12px; padding-right: 17px; }
.plus { margin-left: 13px; }
.winbtns { margin-left: auto; margin-right: 22px; display: flex; gap: 44px; }

/* toolbar */
.chrome-bars { height: 101px; flex: none; background: linear-gradient(#fff, #fff) 0 0 / 100% 100px no-repeat, #dbe5df; border-radius: 10px 10px 0 0; box-shadow: 0 -12px 0 #d3e3fd; position: relative; z-index: 0; }
.toolbar { height: 58px; display: flex; align-items: center; padding-left: 19px; }
.nav-fwd { margin-left: 29px; }
.nav-reload { margin-left: 29px; }
.omnibox { margin-left: 24px; width: 1597px; height: 42px; border-radius: 21px; background: #ebf0f9; display: flex; align-items: center; padding-left: 6px; }
.chip { width: 114px; height: 30px; border-radius: 15px; background: #fff; display: flex; align-items: center; padding-left: 6px; gap: 7px; color: #1f1f1f; font-size: 14.2px; font-weight: 500; }
.chip span { margin-top: -2px; }
.url { margin-left: 10px; width: 1413px; font-size: 16.68px; color: #474747; white-space: nowrap; }
.url b { font-weight: 400; color: #1f1f1f; }
.star { margin-left: 15px; }
.puzzle { margin-left: 24px; }
.tbsep { width: 3px; height: 20px; background: #d3e3fd; border-radius: 2px; margin-left: 20px; }
.avatar { margin-left: 20px; width: 25px; height: 25px; border-radius: 50%; background: #c2185b; color: #fff; font-size: 13px; display: flex; align-items: center; justify-content: center; }
.kebab { margin-left: 31px; fill: #474747; }
.bookmarks { height: 34px; display: flex; align-items: center; padding: 0 19px 0 15px; color: #474747; }
.bookmarks .tbsep { margin-left: auto; margin-right: 19px; }
.bookmarks span { margin-left: 9px; margin-top: -2px; width: 94px; font-size: 14px; }

/* app shell */
.app { flex: 1; min-height: 0; display: flex; }
.rail { width: 63px; flex: none; background: #020404; border-right: 1px solid #1c2122; display: flex; flex-direction: column; align-items: center; }
.logo { fill: #00ab44; margin-top: 19px; }
.rail-chev { margin: 29px 0 24px 2px; }
.space { width: 62px; height: 55px; background: #141819; display: flex; align-items: center; justify-content: center; flex: none; }
.space span { width: 35px; height: 35px; border-radius: 4px; background: #3f4a4a; color: #cfd6d6; font-weight: 700; font-size: 13.5px; display: flex; align-items: center; justify-content: center; }
.rail-help { margin-top: auto; }
.rail-gear { margin: 20px 0 23px; color: #a4b1b1; }
.user { width: 40px; height: 40px; border-radius: 50%; background: #283030; display: flex; align-items: center; justify-content: center; margin-bottom: 15px; }
.body { flex: 1; min-width: 0; display: flex; flex-direction: column; }
.topbar { height: 59px; flex: none; background: #1e2323; border-bottom: 2px solid #262c2c; display: flex; align-items: center; padding-left: 20px; }
.roomname { margin-left: 14px; width: 65px; font-size: 19.5px; color: #5b6666; }
.caret1 { color: #7c8989; }
.gear1 { margin-left: 29px; color: #5b6666; }
.bulb { margin-left: 972px; }
.timebox { margin-left: 27px; width: 394px; height: 37px; border-radius: 4px; background: #023d17; display: flex; align-items: center; padding-left: 10px; color: #c5cece; font-size: 13.5px; }
.playing { width: 92px; height: 27px; border-radius: 14px; background: #00ab44; display: flex; align-items: center; padding-left: 13px; gap: 7px; color: #fff; font-size: 14.2px; }
.caret2 { margin-left: 13px; margin-right: 19px; color: #a9b5b5; }
.timebox .t-g { color: #42b362; width: 38px; }
.t-date { width: 49px; }
.t-dot { width: 13px; text-align: center; }
.arrow { margin-right: 6px; }
.timebox .t-g + .t-dot { margin-left: -4px; }
.timebox .t-last { width: 30px; margin-left: 2px; }
.vsep { width: 1px; height: 37px; background: #2b3232; margin-left: 15px; }
.nodeicon { margin-left: 25px; }
.live { margin-left: 16px; width: 33px; color: #00933b; font-size: 13.8px; }
.one { width: 37px; height: 25px; border-radius: 4px; background: #00ab44; color: #fff; font-weight: 500; display: flex; align-items: center; justify-content: center; }
.signin { margin-left: 25px; width: 76px; height: 43px; border-radius: 4px; background: #00ab44; color: #07180d; font: 17.5px/41px "Liberation Sans", Arial, sans-serif; text-align: center; }

.tabs { height: 38px; flex: none; background: #1e2323; display: flex; color: #76898b; font-size: 13.4px; }
.nt { display: flex; align-items: center; border-right: 1px solid #2b3131; }
.nt span { margin-top: 1px; }
.nt.on { background: #0b0f10; color: #c9d2d2; }
.w-nodes { width: 83px; padding-left: 10px; gap: 6px; }
.w-metrics { width: 88px; padding-left: 12px; gap: 7px; }
.w-top { width: 66px; padding-left: 13px; gap: 8px; }
.w-logs { width: 71px; padding-left: 12px; gap: 9px; }
.w-dash { width: 110px; padding-left: 10px; gap: 7px; }
.w-alerts { width: 136px; padding-left: 11px; gap: 6px; }
.w-alerts > span { width: 34px; }
.w-anom { width: 106px; padding-left: 11px; gap: 7px; }
.w-events { width: 83px; padding-left: 11px; gap: 7px; }
.w-stub { width: 10px; }
.pill { width: 52px; height: 25px; border-radius: 13px; background: #3b2300; display: flex; color: #fff; font-size: 13.5px; align-items: center; }
.pill b { width: 29px; height: 25px; border-radius: 13px; background: #2b0309; font-weight: 500; text-align: center; line-height: 25px; }
.pill em { font-style: normal; font-weight: 500; margin-left: 4px; }

/* dashboard */
.columns { flex: 1; min-height: 0; display: flex; }
.main { width: 1463px; display: flex; flex-direction: column; }
.scroll { height: 747px; display: flex; justify-content: space-between; padding-right: 5px; }
.footer { flex: 1; background: #141819; border-radius: 6px 6px 0 0; }
.content { width: 1430px; margin-left: 8px; display: flex; flex-direction: column; }
.sbar { width: 10px; background: #141819; padding-top: 128px; }
.sbar i { display: block; height: 19px; border-radius: 5px; background: #1f2526; }
.crumbs { height: 43px; margin-bottom: 9px; padding-left: 7px; display: flex; align-items: center; color: #00ab44; font-weight: 700; font-size: 13.8px; }
.crumbs .c1, .crumbs .c2 { margin-left: 5px; }
.crumbs .c1 { width: 51px; }
.crumbs .c2 { width: 57px; }
.gt { font-size: 12px; width: 20px; text-align: center; font-weight: 500; }
.heart { color: #00662a; margin-left: auto; margin-right: 8px; }
.cards { display: flex; gap: 5px; height: 270px; }
.card { background: #141819; border-radius: 4px; display: flex; }
.small { width: 198px; }
.big { width: 306px; }
.num { flex: 1; }
.tools { width: 24px; display: flex; flex-direction: column; align-items: center; padding-top: 9px; color: #232929; gap: 5px; }
.tnd { margin-left: -6px; fill: #050707; stroke: #282e2f; stroke-width: 3px; }
.tools b { width: 15px; height: 15px; border: 1px solid #212727; border-radius: 4px; font: 700 11px/13px "DejaVu Sans Mono", monospace; text-align: center; flex: none; }
.tools svg + b { margin-top: 3px; }
.mid { flex: 1; display: flex; flex-direction: column; align-items: center; }
h3 { font-weight: 400; font-size: 13px; height: 24px; line-height: 24px; margin-top: 10px; color: #b0bcbc; white-space: nowrap; }
.gauge { display: grid; place-items: center; }
.gauge > * { grid-area: 1 / 1; }
.small .gauge { margin-top: 35px; }
.big .gauge { margin-top: -6px; }
.ring { fill: none; stroke: #343c3d; stroke-width: 6px; }
.tick { fill: none; stroke: #3f494a; stroke-width: 4px; stroke-dasharray: 1 14; stroke-dashoffset: .5; }
.long { stroke-width: 6.5px; stroke-dasharray: .9 89.1; stroke-dashoffset: .45; }
.big .ring { stroke-width: 10.5px; }
.big .tick { stroke-width: 5.5px; stroke-dasharray: .7 14.3; stroke-dashoffset: .35; }
.big .long { stroke-width: 10px; stroke-dasharray: .7 89.3; }
.arc { fill: none; stroke: #de3914; stroke-width: 6px; stroke-linecap: round; }
.big .arc { stroke-width: 10.5px; }
.read { display: flex; flex-direction: column; align-items: center; padding-top: 2px; }
.read strong { color: #adb9b9; font-size: 29px; line-height: 40px; }
.read span { color: #5f7374; font-size: 14.7px; line-height: 26px; }
.big .read strong { font-size: 46px; line-height: 53px; }
.big .read span { font-size: 23px; line-height: 36px; }
.big .read { padding-top: 6px; }
.num .mid strong, .num .mid span { font-weight: 700; line-height: 60px; height: 60px; }
.num .mid strong { color: #adb9b9; }
.num .mid span { color: #6c8081; font-size: 46px; }
.num .mid .n-util { font-size: 62px; margin-top: 59px; }
.num .mid .u-util { margin-top: -1px; }
.num .mid .n-back { font-size: 39.5px; margin-top: 58px; }
.num .mid .u-back { margin-top: -11px; }
.side { width: 19px; display: flex; flex-direction: column; align-items: center; padding-top: 20px; padding-right: 1px; color: #b5c0c0; }
.side i { width: 2.5px; height: 205px; background: #2a3132; margin-bottom: 10px; }
.side .rs { margin-top: 5px; width: 11px; height: 11px; }

.tablebar { margin-top: 25px; height: 40px; display: flex; justify-content: space-between; padding: 0 5px; }
.search { width: 234px; height: 36px; border-radius: 2px; background: #2a3131; border: 1px solid #323a3a; display: flex; align-items: center; padding-left: 6px; padding-bottom: 2px; gap: 6px; color: #657778; font-size: 15px; }
.search svg { color: #74898a; }
.gearbtn { width: 25px; height: 25px; margin-top: 5px; border-radius: 4px; background: #1e2323; color: #b4bfbf; display: flex; align-items: center; justify-content: center; }
.table { height: 104px; display: flex; flex-direction: column; flex: none; color: #b2bdbd; }
.groups { height: 20px; background: #0f1314; display: flex; text-align: center; font-size: 14px; line-height: 22px; }
.g2 { width: 317.6px; border-right: 1px solid #1f2526; }
.g1 { flex: 1; border-right: 1px solid #1f2526; }
.g2.left { text-align: left; padding-left: 9px; }
.heads { height: 46px; background: #0f1314; border-bottom: 2px solid #191e1f; display: grid; grid-template-columns: repeat(8, 158.8px) 1fr; font-size: 13px; }
.heads > div { padding: 4px 0 0 9px; }
.heads .br { border-right: 1px solid #1f2526; }
.heads .lab { font-weight: 700; line-height: 37px; font-size: 12.8px; padding-top: 5px; }
.hd { display: flex; justify-content: space-between; }
.hd p { line-height: 20px; }
.hd small { display: block; font-size: 12px; line-height: 15px; color: #63777a; }
.hd svg { color: #dfe5e5; margin-right: 2px; }
.row { height: 38px; background: #070909; display: grid; grid-template-columns: repeat(8, 158.8px) 1fr; line-height: 31px; font-size: 13.1px; }
.row > div { padding-left: 10px; }
.row > .key { display: flex; align-items: center; gap: 12px; padding-bottom: 2px; }
.key i { width: 5px; height: 23px; border-radius: 2px; }
.kg { background: #66aa00; }
.kr { background: #f93613; }
.tableresize { margin-top: auto; display: flex; justify-content: flex-end; padding-right: 5px; color: #99a5a5; }
.subhead { height: 38px; margin-top: 11px; display: flex; align-items: center; color: #00ab44; font-weight: 700; font-size: 14px; }
.dashes { letter-spacing: 1.6px; }
.subhead .heart { margin-right: 5px; margin-top: -6px; }
.chartbar { height: 32px; margin-left: 1px; margin-top: 2px; background: #1e2323; display: flex; align-items: center; padding-left: 12px; gap: 4px; color: #708484; font-size: 13.1px; }
.chartbar > span { padding-top: 1px; }
.cbicons { margin-left: auto; display: flex; align-items: center; gap: 8px; padding-right: 16px; color: #5e7071; }
.cbicons svg:first-child { color: #7a8d8d; margin-right: -1px; }

/* right panel */
.panel { flex: 1; min-width: 0; border-left: 1px solid #1f2526; display: flex; flex-direction: column; color: #aab6b6; }
.p-title { height: 60px; flex: none; border-bottom: 1px solid #1f2526; display: flex; align-items: center; padding: 0 11px 0 10px; color: #c3cccc; font-weight: 700; font-size: 13.2px; }
.p-title span { margin-left: 10px; }
.collapse { margin-left: auto; }
.p-toggle { display: flex; align-items: center; gap: 10px; padding-left: 10px; border-bottom: 1px solid #1f2526; font-size: 14.1px; flex: none; }
.t1 { height: 46px; }
.t2 { height: 58px; }
.toggle { width: 50px; height: 25px; border-radius: 13px; border: 1px solid #2b3232; background: #0b0f10; padding: 2px; }
.toggle::before { content: ""; display: block; width: 20px; height: 20px; border-radius: 50%; background: #7f9090; }
.p-tabs { height: 41px; flex: none; display: flex; border-bottom: 1px solid #1f2526; padding-left: 2px; color: #7f9090; }
.p-tabs div { flex: 1; display: flex; align-items: center; justify-content: center; padding-right: 1px; }
.p-tabs .sel { border-bottom: 2px solid #42b35f; }
.p-search { height: 36px; flex: none; margin: 4px 10px 0; border-radius: 2px; background: #2a3131; border: 1px solid #323a3a; padding-left: 10px; line-height: 34px; color: #657778; font-size: 14.5px; }
.p-count { height: 25px; flex: none; display: flex; justify-content: space-between; align-items: center; padding: 0 10px; font-size: 12.1px; color: #74888a; }
.p-count b { color: #93a3a3; }
.p-count a { color: #00ab44; font-size: 11.9px; }
.treewrap { height: 498px; flex: none; background: #141819; display: flex; overflow: hidden; }
.tree { flex: 1; padding-top: 5px; }
.tr { height: 30px; display: flex; align-items: center; font-size: 14px; flex: none; }
.tr b { font-weight: 700; }
.tr > svg { margin-top: -3px; }
.green { color: #00ab44; }
.l0 { padding-left: 15px; }
.l0 .ic { margin: -3px 13px 0 18px; }
.l1 { padding-left: 39px; }
.l1 .ch { margin-left: -2px; margin-right: -6px; }
.l1 .ic { margin-left: 18px; width: 24px; margin-right: 9px; }
.branch { padding-left: 67px; }
.node { border-left: 1px solid #2b3232; padding-left: 10px; }
.node.act { border-left-color: #00ab44; }
.leafs { margin-left: 13px; border-left: 1px solid #262c2d; padding-left: 10px; }
.tbar { width: 10px; }
.tbar i { display: block; height: 118px; background: #1e2425; border-radius: 0 0 5px 5px; }

/* taskbar */
.taskbar { height: 60px; flex: none; background: #dadada; border-top: 1px solid #c6cbc8; display: flex; align-items: center; color: #1f1f1f; font-size: 14.2px; }
.taskbar p { line-height: 20px; margin-top: -3px; }
.taskbar small { display: block; font-size: 14.2px; color: #555; }
.weather { width: 475px; padding-left: 26px; display: flex; align-items: center; gap: 2px; }
.weather svg { margin-top: -2px; }
.wbadge { font-size: 14px; fill: #fff; }
.tsearch { margin-left: 18px; width: 273px; height: 40px; border-radius: 20px; background: #f4f4f4; border: 1px solid #c6c6c6; display: flex; align-items: center; padding-left: 13px; gap: 12px; font-size: 16.3px; color: #555; }
.apps { margin-left: 4px; display: flex; height: 59px; align-items: center; }
.appi { width: 55px; height: 59px; display: flex; align-items: center; justify-content: center; position: relative; }
.appi.dot::after, .appi.act::after { content: ""; position: absolute; bottom: 6px; left: 24px; width: 8px; height: 4px; border-radius: 2px; background: #7b7b7b; }
.appi.act { width: 49px; height: 49px; margin: 0 3px; border-radius: 5px; background: #f0f0f0; }
.appi.act::after { left: 15px; width: 20px; bottom: 1px; background: #6968d4; }
.badged { margin: -8px 0 0 6px; }
.tg { margin-left: 8px; margin-top: -3px; }
.tgb { font-size: 10px; fill: #fff; }
.fbadge { font-size: 12px; fill: #fff; }
.tray { margin-left: auto; margin-right: 24px; display: flex; align-items: center; text-align: right; }
.wifi { margin-left: 24px; }
.vol { margin-left: 9px; }
.bat { margin-left: 12px; }
.tray p { width: 88px; }
.tray small { color: #1f1f1f; }
```
